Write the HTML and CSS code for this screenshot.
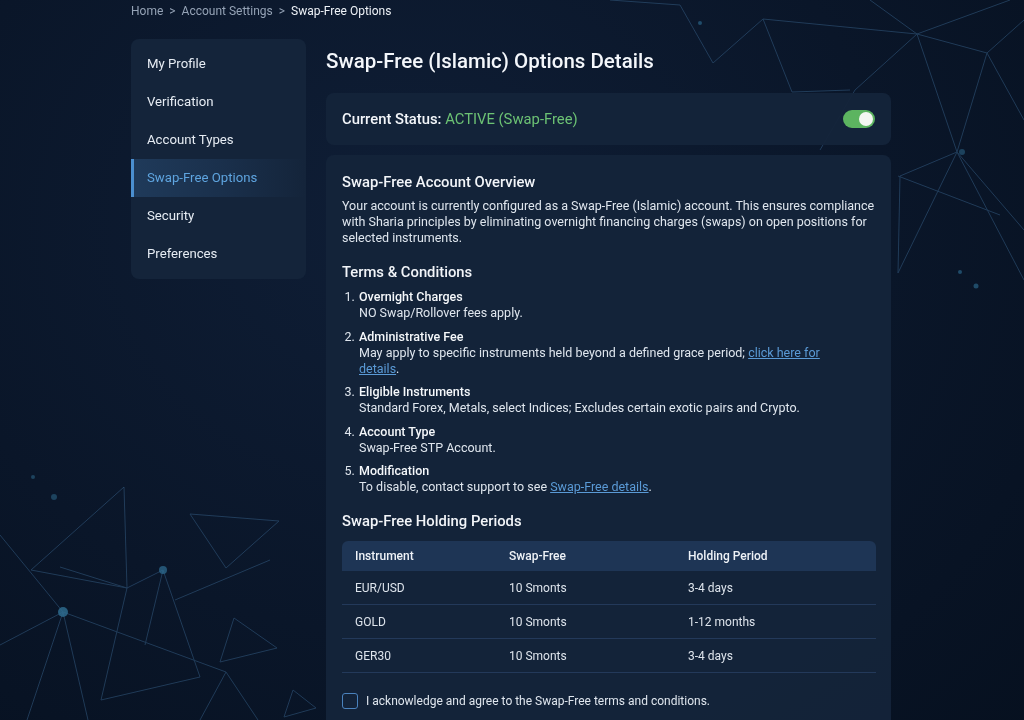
FILE: index.html
```html
<!DOCTYPE html>
<html lang="en">
<head>
    <meta charset="UTF-8">
    <meta name="viewport" content="width=device-width, initial-scale=1.0">
    <title>Swap-Free Options</title>
    <link rel="stylesheet" href="styles.css">
</head>
<body>
    <svg class="backdrop" width="1024" height="720" viewBox="0 0 1024 720">
        <g stroke="#3d6a94" stroke-width="1" fill="none" opacity="0.45">
            <polyline points="713,63 763,19 917,34 987,53 1024,20"/>
            <polyline points="763,19 792,92 850,90"/>
            <polyline points="917,34 855,90 820,150"/>
            <polyline points="917,34 957,152 987,53 1024,120"/>
            <polyline points="957,152 898,273 900,176 957,152 1024,230"/>
            <polyline points="898,176 1000,215"/>
            <polyline points="957,152 1024,280"/>
            <polyline points="870,0 917,34 1010,0"/>
            <polyline points="610,0 680,5 713,63"/>
            <polyline points="0,535 63,612 0,645"/>
            <polyline points="63,612 27,720"/>
            <polyline points="63,612 88,720"/>
            <polyline points="63,612 226,672 258,720"/>
            <polyline points="31,570 124,487 127,588 31,570"/>
            <polyline points="60,567 127,588 163,570 200,677 101,700 127,588"/>
            <polyline points="163,570 145,645"/>
            <polyline points="190,514 279,521 226,568 190,514"/>
            <polyline points="234,618 220,662 277,648 234,618"/>
            <polyline points="293,690 284,717 316,708 293,690"/>
            <polyline points="175,600 270,560"/>
            <polyline points="226,672 200,720"/>
        </g>
        <g fill="#2f6f94">
            <circle cx="63" cy="612" r="5" opacity="0.8"/>
            <circle cx="163" cy="570" r="4" opacity="0.7"/>
            <circle cx="54" cy="497" r="3" opacity="0.5"/>
            <circle cx="33" cy="477" r="2" opacity="0.5"/>
            <circle cx="700" cy="23" r="2" opacity="0.6"/>
            <circle cx="960" cy="272" r="2" opacity="0.6"/>
            <circle cx="976" cy="286" r="2.5" opacity="0.6"/>
            <circle cx="962" cy="152" r="3" opacity="0.5"/>
        </g>
    </svg>

    <div class="page">
        <nav class="breadcrumb">
            <span>Home</span>
            <span class="sep">&gt;</span>
            <span>Account Settings</span>
            <span class="sep">&gt;</span>
            <span class="current">Swap-Free Options</span>
        </nav>

        <div class="layout">
            <aside class="sidebar">
                <a class="side-item">My Profile</a>
                <a class="side-item">Verification</a>
                <a class="side-item">Account Types</a>
                <a class="side-item active">Swap-Free Options</a>
                <a class="side-item">Security</a>
                <a class="side-item">Preferences</a>
            </aside>

            <main class="content">
                <h1>Swap-Free (Islamic) Options Details</h1>

                <div class="card status-card">
                    <p class="status">Current Status: <span class="active-text">ACTIVE (Swap-Free)</span></p>
                    <span class="toggle"><span class="knob"></span></span>
                </div>

                <div class="card details-card">
                    <h2 class="first">Swap-Free Account Overview</h2>
                    <p class="text">Your account is currently configured as a Swap-Free (Islamic) account. This ensures compliance with Sharia principles by eliminating overnight financing charges (swaps) on open positions for selected instruments.</p>

                    <h2 class="spaced">Terms &amp; Conditions</h2>
                    <ol class="terms">
                        <li><b>Overnight Charges</b><br>NO Swap/Rollover fees apply.</li>
                        <li><b>Administrative Fee</b><br>May apply to specific instruments held beyond a defined grace period; <a href="#">click here for</a> <a href="#">details</a>.</li>
                        <li><b>Eligible Instruments</b><br>Standard Forex, Metals, select Indices; Excludes certain exotic pairs and Crypto.</li>
                        <li><b>Account Type</b><br>Swap-Free STP Account.</li>
                        <li><b>Modification</b><br>To disable, contact support to see <a href="#">Swap-Free details</a>.</li>
                    </ol>

                    <h2 class="spaced">Swap-Free Holding Periods</h2>
                    <table class="periods">
                        <thead>
                            <tr><th class="c1">Instrument</th><th class="c2">Swap-Free</th><th>Holding Period</th></tr>
                        </thead>
                        <tbody>
                            <tr><td>EUR/USD</td><td>10 Smonts</td><td>3-4 days</td></tr>
                            <tr><td>GOLD</td><td>10 Smonts</td><td>1-12 months</td></tr>
                            <tr><td>GER30</td><td>10 Smonts</td><td>3-4 days</td></tr>
                        </tbody>
                    </table>

                    <label class="agree"><span class="box"></span>I acknowledge and agree to the Swap-Free terms and conditions.</label>
                </div>
            </main>
        </div>
    </div>
</body>
</html>
```

FILE: styles.css
```css
body {
    margin: 0;
    padding: 0;
    font-family: Roboto, "Liberation Sans", sans-serif;
    color: #e3e9f1;
    background: radial-gradient(ellipse at 40% 30%, #0f1e36 0%, #0a1629 55%, #06101f 100%);
    min-height: 720px;
    overflow: hidden;
}
.backdrop {
    position: fixed;
    left: 0;
    top: 0;
    z-index: 0;
}
.page {
    position: relative;
    z-index: 1;
    width: 760px;
    margin: 0 0 0 131px;
}
.breadcrumb {
    font-size: 12px;
    color: #95a3b6;
    padding-top: 4px;
    height: 35px;
    display: flex;
    gap: 6px;
}
.breadcrumb .current {
    color: #eef2f7;
}
.layout {
    display: flex;
    gap: 20px;
    align-items: flex-start;
}
.sidebar {
    width: 175px;
    flex: none;
    background: #14243a;
    border-radius: 8px;
    padding: 6px 0;
    display: flex;
    flex-direction: column;
}
.side-item {
    height: 38px;
    line-height: 38px;
    padding-left: 16px;
    font-size: 13.2px;
    color: #e6ecf3;
}
.side-item.active {
    color: #5ea4df;
    border-left: 3px solid #4b8fd0;
    padding-left: 13px;
    background: linear-gradient(90deg, #1f3a5a 0%, #1a304c 50%, #14243a 100%);
}
.content {
    width: 565px;
    flex: none;
}
h1 {
    font-size: 20.5px;
    font-weight: 500;
    margin: 10px 0 20px;
    line-height: 24px;
    color: #f4f7fb;
}
.card {
    background: rgba(20, 36, 58, 0.95);
    border-radius: 8px;
}
.status-card {
    height: 52px;
    display: flex;
    align-items: center;
    justify-content: space-between;
    padding: 0 16px;
    margin-bottom: 10px;
}
.status {
    margin: 0;
    font-size: 14.8px;
    font-weight: 500;
    color: #f3f6fa;
}
.active-text {
    color: #6cc274;
    font-weight: 400;
}
.toggle {
    width: 32px;
    height: 18px;
    border-radius: 9px;
    background: #5cb460;
    position: relative;
}
.knob {
    position: absolute;
    right: 2px;
    top: 2px;
    width: 14px;
    height: 14px;
    border-radius: 50%;
    background: #f4f7f2;
}
.details-card {
    padding: 18px 15px 20px 16px;
    min-height: 560px;
}
h2 {
    font-size: 14.8px;
    font-weight: 500;
    margin: 0 0 8px;
    line-height: 18px;
    color: #f2f5f9;
}
h2.first {
    margin-bottom: 7px;
}
h2.spaced {
    margin-top: 17px;
}
.text {
    font-size: 12.5px;
    line-height: 16px;
    margin: 0;
    color: #dfe6ee;
}
.terms {
    margin: 0 26px 0 0;
    padding-left: 16px;
    font-size: 12.5px;
    line-height: 16px;
    color: #dfe6ee;
}
.terms li {
    margin-bottom: 7.5px;
    padding-left: 1px;
}
.terms b {
    font-weight: 500;
    color: #f5f8fb;
}
.terms a {
    color: #5a9ad6;
}
.periods {
    width: 534px;
    margin-top: 11px;
    border-collapse: collapse;
    font-size: 12px;
    color: #dde4ec;
}
.periods th {
    background: #1e3555;
    text-align: left;
    font-weight: 500;
    height: 30px;
    padding: 0 0 0 13px;
    color: #eef2f7;
}
.periods th:first-child {
    border-top-left-radius: 6px;
}
.periods th:last-child {
    border-top-right-radius: 6px;
}
.periods th.c1 {
    width: 141px;
}
.periods th.c2 {
    width: 166px;
}
.periods td {
    height: 33px;
    padding: 0 0 0 13px;
    border-bottom: 1px solid #23395a;
}
.agree {
    display: flex;
    align-items: center;
    gap: 8px;
    margin-top: 20px;
    font-size: 12px;
    color: #dfe6ee;
}
.box {
    width: 14px;
    height: 14px;
    border: 1.5px solid #4a82bd;
    border-radius: 3px;
}
```
